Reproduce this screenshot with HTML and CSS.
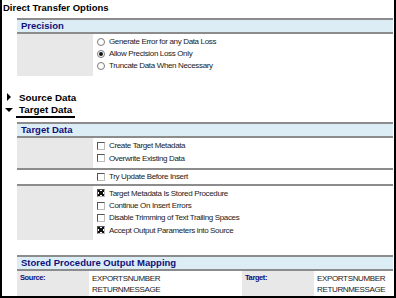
FILE: index.html
```html
<!DOCTYPE html>
<html lang="en">
<head>
	<meta charset="UTF-8">
	<title>Direct Transfer Options</title>
	<link rel="stylesheet" href="styles.css">
</head>
<body>

	<div class="panel">

		<div class="title">Direct Transfer Options</div>

		<div class="section precision">
			<div class="section-head">Precision</div>
			<div class="group">
				<div class="label-cell shaded"></div>
				<div class="options">
					<div class="option"><span class="radio"></span><span>Generate Error for any Data Loss</span></div>
					<div class="option"><span class="radio on"></span><span>Allow Precision Loss Only</span></div>
					<div class="option"><span class="radio"></span><span>Truncate Data When Necessary</span></div>
				</div>
			</div>
		</div>

		<div class="toggle">
			<span class="arrow right"></span><span class="toggle-text">Source Data</span>
		</div>
		<div class="toggle open">
			<span class="arrow down"></span><span class="toggle-text">Target Data</span>
		</div>

		<div class="section target">
			<div class="section-head">Target Data</div>
			<div class="group first">
				<div class="label-cell shaded"></div>
				<div class="options">
					<div class="option"><span class="check"></span><span>Create Target Metadata</span></div>
					<div class="option"><span class="check"></span><span>Overwrite Existing Data</span></div>
				</div>
			</div>
			<div class="group lined single">
				<div class="label-cell"></div>
				<div class="options">
					<div class="option"><span class="check"></span><span>Try Update Before Insert</span></div>
				</div>
			</div>
			<div class="group lined last">
				<div class="label-cell shaded"></div>
				<div class="options">
					<div class="option"><span class="check on"></span><span>Target Metadata Is Stored Procedure</span></div>
					<div class="option"><span class="check"></span><span>Continue On Insert Errors</span></div>
					<div class="option"><span class="check"></span><span>Disable Trimming of Text Trailing Spaces</span></div>
					<div class="option"><span class="check on"></span><span>Accept Output Parameters into Source</span></div>
				</div>
			</div>
		</div>

		<div class="section mapping">
			<div class="section-head">Stored Procedure Output Mapping</div>
			<div class="map-row">
				<div class="map-label">Source:</div>
				<div class="map-values">
					<div>EXPORTSNUMBER</div>
					<div>RETURNMESSAGE</div>
				</div>
				<div class="map-label">Target:</div>
				<div class="map-values">
					<div>EXPORTSNUMBER</div>
					<div>RETURNMESSAGE</div>
				</div>
			</div>
		</div>

	</div>

</body>
</html>
```

FILE: styles.css
```css
* {
	margin: 0;
	padding: 0;
	box-sizing: border-box;
}

body {
	font-family: "Liberation Sans", Arial, sans-serif;
	font-size: 8px;
	letter-spacing: -0.35px;
	color: #1a1a1a;
	background: #fff;
}

.panel {
	width: 396px;
	height: 298px;
	border: 2px solid #000;
	border-top: none;
	padding: 0 1px 0 15px;
	overflow: hidden;
}

.title {
	font-weight: 700;
	font-size: 9.5px;
	letter-spacing: 0;
	color: #000;
	margin-left: -14px;
	height: 18px;
	padding-top: 2px;
}

.section-head {
	font-weight: 700;
	font-size: 9.5px;
	letter-spacing: 0;
	color: #10107a;
	background: #dcedf5;
	border-top: 2px solid #8c8c8c;
	border-bottom: 2px solid #8c8c8c;
	height: 16px;
	line-height: 12px;
	padding-left: 4px;
}

.group {
	display: flex;
}

.group.lined {
	border-top: 2px solid #8c8c8c;
}

.label-cell {
	width: 76px;
	flex: none;
}

.label-cell.shaded {
	background: #e8e8e8;
}

.options {
	padding-left: 4px;
}

.option {
	display: flex;
	align-items: center;
	height: 12.5px;
	white-space: nowrap;
}

/* per-group spacing */
.precision .group {
	height: 42px;
}

.precision .options {
	padding-top: 1.5px;
}

.precision .option {
	height: 12px;
}

.target .first {
	height: 30px;
}

.target .first .options {
	padding-top: 1.5px;
}

.target .single {
	height: 16px;
}

.target .single .options {
	padding-top: 0.5px;
}

.target .last {
	height: 56px;
}

.target .last .options {
	padding-top: 1px;
}

.target .last .option {
	height: 12.4px;
}

.radio {
	width: 8px;
	height: 8px;
	border-radius: 50%;
	border: 1px solid #7a7a7a;
	margin-right: 4px;
	position: relative;
	background: #fff;
	flex: none;
}

.radio.on::after {
	content: "";
	position: absolute;
	left: 1px;
	top: 1px;
	width: 4px;
	height: 4px;
	border-radius: 50%;
	background: #111;
}

.check {
	width: 8px;
	height: 8px;
	border: 1px solid;
	border-color: #555 #bbb #bbb #555;
	margin-right: 4px;
	position: relative;
	background: #fff;
	flex: none;
}

.check.on::after {
	content: "";
	position: absolute;
	left: 0;
	top: 0;
	width: 6px;
	height: 6px;
	background:
		linear-gradient(45deg, transparent 35%, #111 35%, #111 65%, transparent 65%),
		linear-gradient(-45deg, transparent 35%, #111 35%, #111 65%, transparent 65%);
}

.toggle {
	display: flex;
	align-items: center;
	margin-left: -15px;
	height: 14px;
	font-weight: 700;
	font-size: 9.8px;
	letter-spacing: 0;
	color: #000;
}

.section + .toggle {
	margin-top: 14px;
}

.arrow {
	width: 13px;
	margin-right: 4px;
	display: flex;
	justify-content: center;
}

.arrow.right::before {
	content: "";
	border-left: 4px solid #000;
	border-top: 4px solid transparent;
	border-bottom: 4px solid transparent;
}

.arrow.down::before {
	content: "";
	border-top: 4px solid #000;
	border-left: 4px solid transparent;
	border-right: 4px solid transparent;
}

.toggle.open {
	align-items: flex-start;
	margin-bottom: 4px;
}

.toggle.open .arrow {
	margin-top: 4px;
}

.toggle.open .toggle-text {
	line-height: 12px;
	border-bottom: 2px solid #000;
	padding: 0 3px;
	margin-left: -3px;
}

.mapping {
	margin-top: 15px;
}

.map-row {
	display: grid;
	grid-template-columns: 72px 153px 72px 1fr;
	height: 24px;
}

.map-label {
	background: #e8e8e8;
	font-weight: 700;
	font-size: 7.5px;
	letter-spacing: -0.4px;
	color: #10107a;
	padding: 2px 3px;
}

.map-values {
	padding: 2px 3px;
	line-height: 11px;
}
```
